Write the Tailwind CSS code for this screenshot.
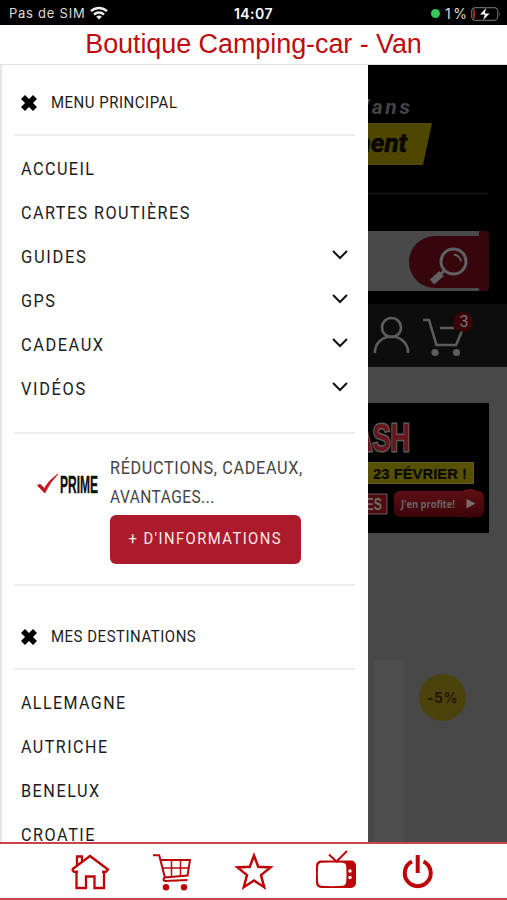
<!DOCTYPE html>
<html lang="fr">
<head>
<meta charset="utf-8">
<title>Boutique Camping-car - Van</title>
<script src="https://cdn.jsdelivr.net/npm/@tailwindcss/browser@4"></script>
</head>
<body class="w-[507px] h-[900px] overflow-hidden bg-white flex flex-col font-['Roboto',sans-serif]">

<!-- Status bar -->
<header class="h-[25px] shrink-0 bg-black grid grid-cols-3 items-center pt-[2px] font-['Inter',sans-serif] text-[13px] text-[#dcdcdc]">
  <div class="flex items-center gap-[6px] pl-[9px] whitespace-nowrap">
    <span class="tracking-[0.75px]">Pas de SIM</span>
    <svg width="18" height="14" viewBox="0 0 18 14" fill="none" stroke="#eee" stroke-width="2.5" class="-mt-[2px] -ml-px"><path d="M1 5.2a11.5 11.5 0 0 1 16 0M4 8.6a7.3 7.3 0 0 1 10 0"/><path d="M9 13.6 6.2 10.8a4 4 0 0 1 5.600 0z" fill="#eee" stroke="none"/></svg>
  </div>
  <div class="text-center text-white font-semibold text-[14px] tracking-[0.5px]">14:07</div>
  <div class="flex items-center justify-end pr-[6px] whitespace-nowrap">
    <span class="size-[9px] rounded-full bg-[#34c759] mr-[5px]"></span>
    <span class="mr-[4px] text-[14px]">1&#8201;%</span>
    <svg width="30" height="14" viewBox="0 0 30 14"><rect x=".7" y=".7" width="26" height="12.6" rx="3.6" fill="none" stroke="#666" stroke-width="1.2"/><path d="M28.2 4.8q1.6 2.2 0 4.4z" fill="#666"/><path d="M2 4q0-2 2-2v10q-2 0-2-2z" fill="#a51e28"/><path d="M15.5.2 8.6 7.8h4.8L11.900 13.8 19 6.2h-4.900z" fill="#fff" stroke="#000" stroke-width=".5"/></svg>
  </div>
</header>

<h1 class="h-[40px] shrink-0 bg-white border-b border-[#e2e2e2] text-center text-[#bd0c10] font-['Liberation_Sans',sans-serif] text-[27px] leading-[39px] whitespace-nowrap tracking-[-0.08px]">Boutique Camping-car - Van</h1>

<main class="h-[777px] shrink-0 flex overflow-hidden">
  <!-- Drawer -->
  <aside class="w-[368px] shrink-0 border-l-2 border-[#e6e6e6] bg-white pl-[12px] pr-[13px] text-[18px] text-[#1c1c1c]">
    <div class="h-[71px] pt-[7px] border-b-2 border-[#ededed] flex items-center gap-[14px] pl-[7px]">
      <svg width="16" height="16" viewBox="0 0 16 16" stroke="#000" stroke-width="5.6"><path d="M2 2 14 14M14 2 2 14"/></svg>
      <span class="inline-block origin-left scale-x-[0.88] tracking-[0.6px] text-[17px] whitespace-nowrap">MENU PRINCIPAL</span>
    </div>
    <nav class="pt-[10px] pl-[7px] pr-[7px] h-[298px] border-b-2 border-[#ededed]">
      <div class="h-[44px] flex items-center"><span class="origin-left scale-x-[0.9] tracking-[1.6px]">ACCUEIL</span></div>
      <div class="h-[44px] flex items-center"><span class="origin-left scale-x-[0.9] tracking-[1.6px] whitespace-nowrap">CARTES ROUTIÈRES</span></div>
      <div class="h-[44px] flex items-center justify-between"><span class="origin-left scale-x-[0.92] tracking-[1.8px]">GUIDES</span><svg class="-mt-[3px]" width="16" height="10" viewBox="0 0 16 10" fill="none" stroke="#111" stroke-width="2"><path d="m1 1 7 7 7-7"/></svg></div>
      <div class="h-[44px] flex items-center justify-between"><span class="origin-left scale-x-[0.9] tracking-[1.6px]">GPS</span><svg class="-mt-[3px]" width="16" height="10" viewBox="0 0 16 10" fill="none" stroke="#111" stroke-width="2"><path d="m1 1 7 7 7-7"/></svg></div>
      <div class="h-[44px] flex items-center justify-between"><span class="origin-left scale-x-[0.91] tracking-[1.7px]">CADEAUX</span><svg class="-mt-[3px]" width="16" height="10" viewBox="0 0 16 10" fill="none" stroke="#111" stroke-width="2"><path d="m1 1 7 7 7-7"/></svg></div>
      <div class="h-[44px] flex items-center justify-between"><span class="origin-left scale-x-[0.91] tracking-[1.8px]">VIDÉOS</span><svg class="-mt-[3px]" width="16" height="10" viewBox="0 0 16 10" fill="none" stroke="#111" stroke-width="2"><path d="m1 1 7 7 7-7"/></svg></div>
    </nav>
    <section class="h-[152px] pt-[19px] border-b-2 border-[#ededed] flex">
      <svg class="mt-[19px] ml-[22px] shrink-0" width="66" height="28" viewBox="0 0 66 28"><path d="M1.5 13.5 4 12.2l4.4 4.3Q13 8 22 2 14 10 8.8 21z" fill="#c4121a" stroke="#c4121a" stroke-width=".8"/><text x="24" y="20.500" textLength="38" lengthAdjust="spacingAndGlyphs" font-family="Liberation Sans" font-weight="700" font-size="24.5" fill="#111" stroke="#111" stroke-width=".4">PRIME</text></svg>
      <div class="ml-[8px] w-[220px] text-[#454545] leading-[29px]">
        <div class="origin-left scale-x-[0.9] tracking-[0.75px] whitespace-nowrap">RÉDUCTIONS, CADEAUX,</div>
        <div class="origin-left scale-x-[0.86] tracking-[0.55px] whitespace-nowrap">AVANTAGES...</div>
        <button class="mt-[4px] w-[191px] h-[49px] rounded-[6px] bg-[#ac1b2b] text-[#fbe9e9] flex items-center justify-center whitespace-nowrap text-[17px] pb-[2px]"><span class="scale-x-[0.87] tracking-[1.65px]">+ D'INFORMATIONS</span></button>
      </div>
    </section>
    <div class="h-[84px] pt-[20px] border-b-2 border-[#ededed] flex items-center gap-[14px] pl-[7px]">
      <svg width="16" height="16" viewBox="0 0 16 16" stroke="#000" stroke-width="5.6"><path d="M2 2 14 14M14 2 2 14"/></svg>
      <span class="inline-block origin-left scale-x-[0.88] tracking-[0.6px] text-[17px] whitespace-nowrap">MES DESTINATIONS</span>
    </div>
    <nav class="pt-[10px] pl-[7px]">
      <div class="h-[44px] flex items-center"><span class="origin-left scale-x-[0.89] tracking-[1.6px]">ALLEMAGNE</span></div>
      <div class="h-[44px] flex items-center"><span class="origin-left scale-x-[0.89] tracking-[1.7px]">AUTRICHE</span></div>
      <div class="h-[44px] flex items-center"><span class="origin-left scale-x-[0.9] tracking-[1.7px]">BENELUX</span></div>
      <div class="h-[44px] flex items-center"><span class="origin-left scale-x-[0.9] tracking-[1.7px]">CROATIE</span></div>
    </nav>
  </aside>

  <!-- Dimmed shop page -->
  <div class="w-[139px] shrink-0 bg-[#484848] flex flex-col">
    <div class="h-[239px] shrink-0 bg-black">
      <svg width="139" height="239" viewBox="368 65 139 239">
        <text x="356" y="113.500" textLength="54" lengthAdjust="spacing" font-family="Roboto" font-weight="700" font-style="italic" font-size="21" fill="#444">Vans</text>
        <path d="M368 123h64l-9 42h-55z" fill="#4f4600"/>
        <text x="349" y="152" textLength="58" lengthAdjust="spacingAndGlyphs" font-family="Roboto" font-weight="700" font-style="italic" font-size="25" fill="#080800" stroke="#080800" stroke-width=".7">ment</text>
        <path d="M368 193.5h120" stroke="#151515" stroke-width="1.5"/>
        <path d="M368 231h111v60H368z" fill="#494949"/>
        <path d="M479 231h6q4 0 4 4v52q0 4-4 4h-6v-3h-44a26 26 0 0 1 0-52h44z" fill="#37050c"/>
        <g fill="none" stroke="#606060"><circle cx="453.500" cy="261.500" r="12.500" stroke-width="3"/><path d="M454 254.500q6 1 7 7" stroke-width="1.800"/><path d="m444 271-4.500 4" stroke-width="3"/><path d="m441.500 273.500-9.500 8.500" stroke="#626060" stroke-width="6.500"/></g>
      </svg>
    </div>
    <div class="h-[63px] shrink-0 bg-[#0d0d0d]">
      <svg width="139" height="63" viewBox="368 304 139 63" fill="none" stroke="#5c5c5c" stroke-width="2.6">
        <circle cx="391.500" cy="327.500" r="9.500"/><path d="M375 353v-1a16.500 15.500 0 0 1 33 0v1"/>
        <path d="M423 320h6l7.500 25H456l6-14M440 328h14"/>
        <g fill="#5c5c5c" stroke="none"><circle cx="435" cy="352.500" r="3.600"/><circle cx="456.500" cy="352.500" r="3.600"/></g>
        <circle cx="463" cy="322" r="10" fill="#3b0308" stroke="none"/>
        <text x="464" y="327" text-anchor="middle" font-family="Roboto" font-size="16" fill="#777" stroke="none">3</text>
      </svg>
    </div>
    <div class="h-[130px] w-[121px] mt-[36px] shrink-0 bg-black">
      <svg width="121" height="130" viewBox="368 403 121 130">
        <defs><linearGradient id="red" x2="0" y2="1"><stop stop-color="#600f15"/><stop offset="1" stop-color="#3a0408"/></linearGradient></defs>
        <text x="353" y="450.500" textLength="57" lengthAdjust="spacingAndGlyphs" font-family="Liberation Sans" font-weight="700" font-size="39" fill="#67161d" stroke="#5c5c5c" stroke-width="3" paint-order="stroke">ASH</text>
        <path d="M367 462.500h106.500v21H367z" fill="#565000" stroke="#5e5b28"/>
        <text x="373" y="479" textLength="94" lengthAdjust="spacingAndGlyphs" font-family="Liberation Sans" font-weight="700" font-size="15" fill="#050505">23 FÉVRIER !</text>
        <path d="M366 494h21v20h-21z" fill="#4e0c12" stroke="#666163"/>
        <text x="358" y="510" textLength="24" lengthAdjust="spacingAndGlyphs" font-family="Liberation Sans" font-weight="700" font-size="17" fill="#6c6c6c">TES</text>
        <rect x="394" y="491" width="90" height="26" rx="6" fill="url(#red)"/><circle cx="470" cy="503.500" r="14.500" fill="url(#red)"/>
        <text x="401" y="507.500" textLength="54" lengthAdjust="spacingAndGlyphs" font-family="Open Sans" font-weight="700" font-size="10.500" fill="#6b6262">J'en profite!</text>
        <path d="m466.500 499 9 4.500-9 5z" fill="#776b6b"/>
      </svg>
    </div>
    <div class="mt-[127px] flex-1 flex">
      <div class="w-[30px] ml-[6px] bg-[#4d4d4d] shrink-0"></div>
      <div class="ml-[15px] mt-[14px] size-[47px] rounded-full bg-[#4c420b] text-[#1e1607] flex items-center justify-center font-['Inter',sans-serif] font-bold text-[14px] tracking-[0.5px]">-5%</div>
    </div>
  </div>
</main>

<!-- Tab bar -->
<footer class="h-[58px] shrink-0 border-y-2 border-[#c5454a] bg-white">
  <svg width="507" height="54" viewBox="0 844 507 54" fill="none" stroke="#bd0508" stroke-width="2.300">
    <path d="M76.500 870.500v17.500H86v-11.500h8.500V888h9.500v-17.500M72 869.500l18-13.500 18 13.500-2 2.300h-4M72 869.500l2 2.300h4M77 865v-8.500h5v5.500"/>
    <g stroke-width="2"><path d="M153 855.300h6.200L165 878M161 860h29l-2.500 15.500-23 2q-2.500 3 1 3.500l22-1"/><path d="M162.500 868h26M171.500 860v17M180.500 860v16.500" stroke-width="1.500"/><g fill="#bd0508" stroke="none"><circle cx="166" cy="887.300" r="3.200"/><circle cx="184" cy="887.300" r="3.200"/></g></g>
    <path d="m254 855.500 4.200 11.300 12.300.6-9.500 7.700 3.200 12.100L254 880.500l-10.200 6.700 3.200-12.100-9.500-7.700 12.300-.6z" stroke-width="2.500"/>
    <rect x="316" y="860.500" width="40" height="27.500" rx="5" fill="#bd0508" stroke="none"/><path d="M321.500 862.800q11-.8 21 0 3.500.2 3.700 4 .7 8 0 15-.3 3.700-3.700 4-10 .7-21 0-3.200-.3-3.400-4-.6-8 0-15 .2-3.700 3.400-4z" fill="#fff" stroke="none"/>
    <path d="m329 854.500 7.500 7 10.500-10.500" stroke-width="2"/><circle cx="350" cy="871" r="1.700" fill="#fff" stroke="none"/><circle cx="350" cy="877.500" r="1.700" fill="#fff" stroke="none"/>
    <path d="M412 861.500a13 13 0 1 0 11.500 0" stroke-width="4"/><path d="M417.700 855v18" stroke-width="4"/>
  </svg>
</footer>
</body>
</html>
